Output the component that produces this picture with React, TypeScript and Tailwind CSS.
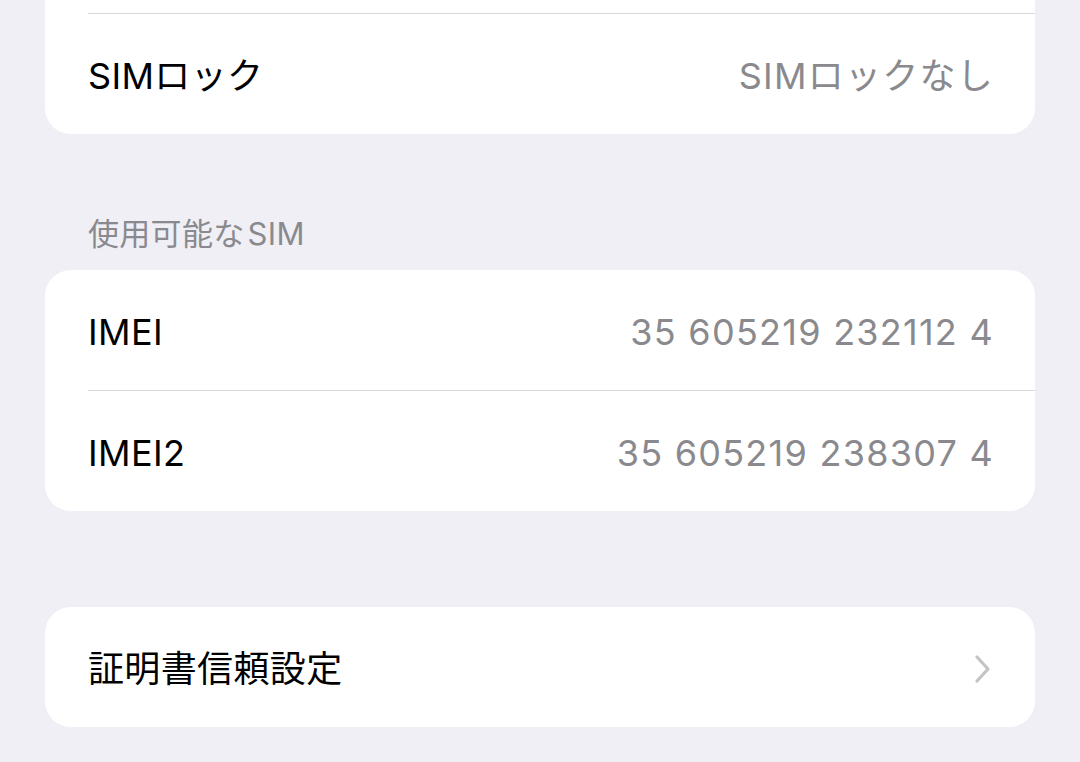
import type * as React from "react";

const FONT = {
  fontFamily: "Inter, 'Noto Sans CJK JP', sans-serif",
};

function Separator() {
  return <div className="ml-[43px] h-px bg-[#d8d8dc]" />;
}

function Row({
  label,
  value,
  chevron = false,
}: {
  label: string;
  value?: string;
  chevron?: boolean;
}) {
  return (
    <div className="flex h-[120px] items-center justify-between pt-[3px] pl-[43px] pr-[41px]">
      <span className="text-[36px] leading-none tracking-[0.01em] text-black">
        {label}
      </span>
      {value && (
        <span className="text-[36px] leading-none tracking-[0.035em] text-[#8a8a8e]">
          {value}
        </span>
      )}
      {chevron && (
        <svg
          className="mr-[2px]"
          width="20"
          height="30"
          viewBox="0 0 20 30"
          fill="none"
          stroke="#c4c4c7"
          strokeWidth="3.2"
          strokeLinecap="round"
          strokeLinejoin="round"
        >
          <path d="M5 3 L16 15 L5 27" />
        </svg>
      )}
    </div>
  );
}

function Card({
  children,
  className = "",
}: {
  children: React.ReactNode;
  className?: string;
}) {
  return (
    <div className={`mx-[45px] overflow-hidden bg-white ${className}`}>
      {children}
    </div>
  );
}

export default function App() {
  return (
    <div className="h-[762px] w-[1080px] overflow-hidden bg-[#f0eff6]" style={FONT}>
      <Card className="rounded-b-[26px] pt-[13px]">
        <Separator />
        <Row label="SIMロック" value="SIMロックなし" />
      </Card>

      <div className="mt-[82px] mb-[18px] pl-[88px] text-[31px] leading-[36px] tracking-[0.01em] text-[#8a8a8e]">
        使用可能な<span className="ml-[3px]">SIM</span>
      </div>

      <Card className="rounded-[26px]">
        <Row label="IMEI" value="35 605219 232112 4" />
        <Separator />
        <Row label="IMEI2" value="35 605219 238307 4" />
      </Card>

      <Card className="mt-[96px] rounded-[26px]">
        <Row label="証明書信頼設定" chevron />
      </Card>
    </div>
  );
}
